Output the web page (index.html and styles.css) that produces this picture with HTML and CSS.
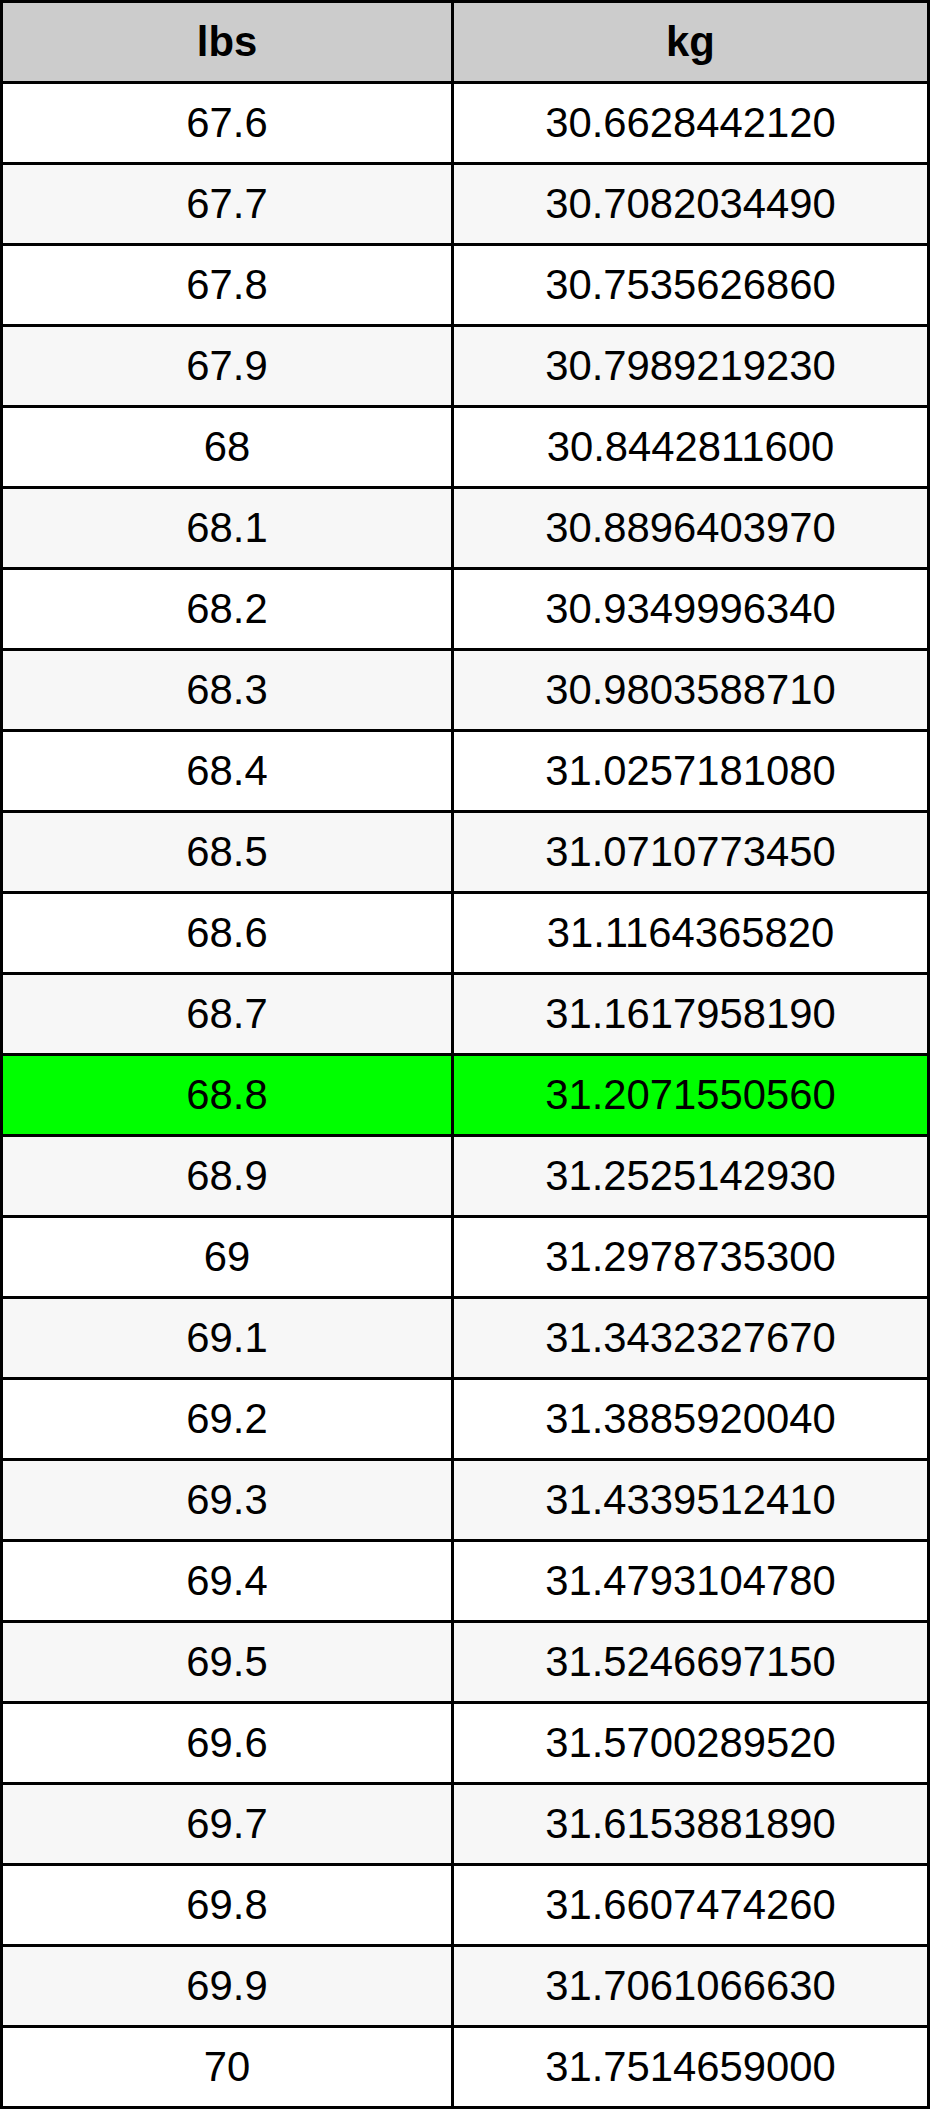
FILE: index.html
```html
<!DOCTYPE html>
<html lang="en">
<head>
<meta charset="utf-8">
<title>lbs to kg</title>
<link rel="stylesheet" href="styles.css">
</head>
<body>
<table class="conv">
  <colgroup><col class="c1"><col class="c2"></colgroup>
  <thead>
    <tr class="head"><th>lbs</th><th>kg</th></tr>
  </thead>
  <tbody>
    <tr class="odd"><td>67.6</td><td>30.6628442120</td></tr>
    <tr class="even"><td>67.7</td><td>30.7082034490</td></tr>
    <tr class="odd"><td>67.8</td><td>30.7535626860</td></tr>
    <tr class="even"><td>67.9</td><td>30.7989219230</td></tr>
    <tr class="odd"><td>68</td><td>30.8442811600</td></tr>
    <tr class="even"><td>68.1</td><td>30.8896403970</td></tr>
    <tr class="odd"><td>68.2</td><td>30.9349996340</td></tr>
    <tr class="even"><td>68.3</td><td>30.9803588710</td></tr>
    <tr class="odd"><td>68.4</td><td>31.0257181080</td></tr>
    <tr class="even"><td>68.5</td><td>31.0710773450</td></tr>
    <tr class="odd"><td>68.6</td><td>31.1164365820</td></tr>
    <tr class="even"><td>68.7</td><td>31.1617958190</td></tr>
    <tr class="hl"><td>68.8</td><td>31.2071550560</td></tr>
    <tr class="even"><td>68.9</td><td>31.2525142930</td></tr>
    <tr class="odd"><td>69</td><td>31.2978735300</td></tr>
    <tr class="even"><td>69.1</td><td>31.3432327670</td></tr>
    <tr class="odd"><td>69.2</td><td>31.3885920040</td></tr>
    <tr class="even"><td>69.3</td><td>31.4339512410</td></tr>
    <tr class="odd"><td>69.4</td><td>31.4793104780</td></tr>
    <tr class="even"><td>69.5</td><td>31.5246697150</td></tr>
    <tr class="odd"><td>69.6</td><td>31.5700289520</td></tr>
    <tr class="even"><td>69.7</td><td>31.6153881890</td></tr>
    <tr class="odd"><td>69.8</td><td>31.6607474260</td></tr>
    <tr class="even"><td>69.9</td><td>31.7061066630</td></tr>
    <tr class="odd"><td>70</td><td>31.7514659000</td></tr>
  </tbody>
</table>
</body>
</html>
```
FILE: styles.css
```css
html, body {
  margin: 0;
  padding: 0;
  background: #ffffff;
}

.conv {
  width: 930px;
  table-layout: fixed;
  border-collapse: separate;
  border-spacing: 3px;
  background: #000000;
  font-family: "Liberation Sans", Arial, sans-serif;
  font-size: 41.8px;
  color: #000000;
}

.conv .c1 { width: 448px; }
.conv .c2 { width: 473px; }

.conv th,
.conv td {
  height: 78px;
  padding: 0;
  text-align: center;
  vertical-align: middle;
  line-height: 1;
}

.conv th {
  font-weight: bold;
  background: #cccccc;
}

.odd td { background: #ffffff; }
.even td { background: #f7f7f7; }
.hl td { background: #00ff00; }
```
